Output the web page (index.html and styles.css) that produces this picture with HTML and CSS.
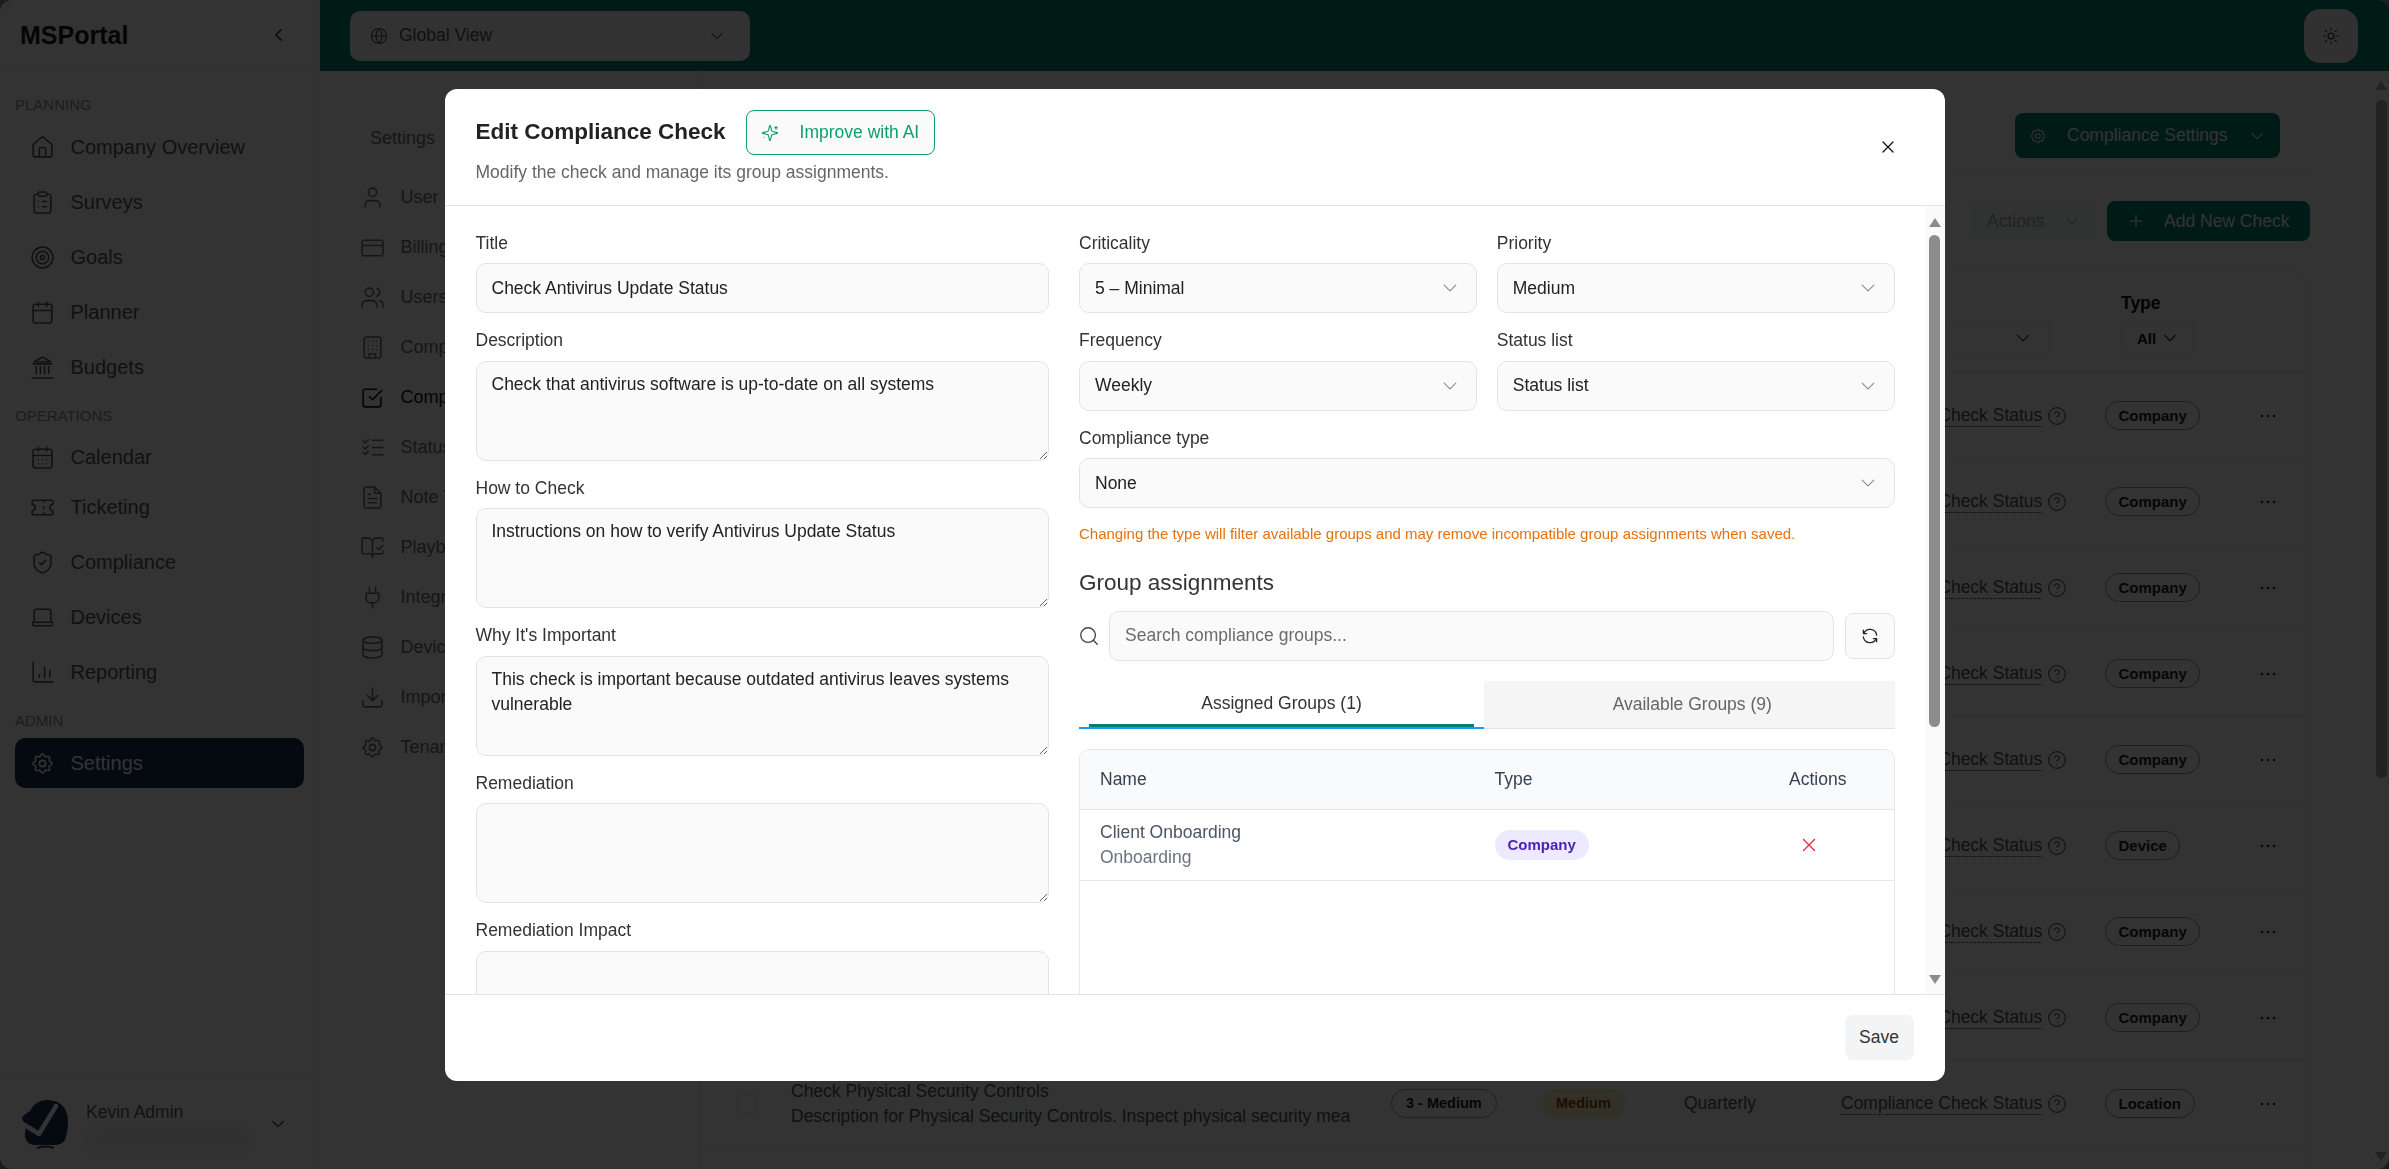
FILE: index.html
```html
<!DOCTYPE html>
<html lang="en">
<head>
<meta charset="utf-8">
<title>MSPortal – Edit Compliance Check</title>
<link rel="stylesheet" href="styles.css">
</head>
<body>
<svg class="defs" aria-hidden="true">
  <symbol id="home" viewBox="0 0 24 24"><path d="M15 21v-8a1 1 0 0 0-1-1h-4a1 1 0 0 0-1 1v8"/><path d="M3 10a2 2 0 0 1 .709-1.528l7-6a2 2 0 0 1 2.582 0l7 6A2 2 0 0 1 21 10v9a2 2 0 0 1-2 2H5a2 2 0 0 1-2-2z"/></symbol>
  <symbol id="clip" viewBox="0 0 24 24"><rect x="8" y="2" width="8" height="4" rx="1"/><path d="M16 4h2a2 2 0 0 1 2 2v14a2 2 0 0 1-2 2H6a2 2 0 0 1-2-2V6a2 2 0 0 1 2-2h2"/><path d="M12 11h4M12 16h4M8 11h.01M8 16h.01"/></symbol>
  <symbol id="target" viewBox="0 0 24 24"><circle cx="12" cy="12" r="10"/><circle cx="12" cy="12" r="6"/><circle cx="12" cy="12" r="2"/></symbol>
  <symbol id="cal" viewBox="0 0 24 24"><path d="M8 2v4M16 2v4"/><rect x="3" y="4" width="18" height="18" rx="2"/><path d="M3 10h18"/></symbol>
  <symbol id="bank" viewBox="0 0 24 24"><path d="M2 22h20M6 18v-7M10 18v-7M14 18v-7M18 18v-7M3 8.500h18M12 2 4 6.500h16z"/></symbol>
  <symbol id="caldots" viewBox="0 0 24 24"><path d="M8 2v4M16 2v4"/><rect x="3" y="4" width="18" height="18" rx="2"/><path d="M3 10h18M8 14h.01M12 14h.01M16 14h.01M8 18h.01M12 18h.01M16 18h.01"/></symbol>
  <symbol id="ticket" viewBox="0 0 24 24"><path d="M2 9a3 3 0 0 1 0 6v2a2 2 0 0 0 2 2h16a2 2 0 0 0 2-2v-2a3 3 0 0 1 0-6V7a2 2 0 0 0-2-2H4a2 2 0 0 0-2 2Z"/><path d="M13 5v2M13 17v2M13 11v2"/></symbol>
  <symbol id="shield" viewBox="0 0 24 24"><path d="M20 13c0 5-3.500 7.500-7.660 8.950a1 1 0 0 1-.67-.01C7.500 20.500 4 18 4 13V6a1 1 0 0 1 1-1c2 0 4.500-1.200 6.240-2.720a1.170 1.170 0 0 1 1.520 0C14.510 3.810 17 5 19 5a1 1 0 0 1 1 1z"/><path d="m9 12 2 2 4-4"/></symbol>
  <symbol id="laptop" viewBox="0 0 24 24"><path d="M4 16V6a2 2 0 0 1 2-2h12a2 2 0 0 1 2 2v10"/><path d="M2.500 16.500h19v2.500a1 1 0 0 1-1 1h-17a1 1 0 0 1-1-1z"/></symbol>
  <symbol id="chart" viewBox="0 0 24 24"><path d="M3 2v17a2 2 0 0 0 2 2h17M9 17v-3M14 17V7M19 17v-7"/></symbol>
  <symbol id="gear" viewBox="0 0 24 24"><path d="M10.325 4.317c.426-1.756 2.924-1.756 3.350 0a1.724 1.724 0 0 0 2.573 1.066c1.543-.94 3.310.826 2.370 2.370a1.724 1.724 0 0 0 1.065 2.572c1.756.426 1.756 2.924 0 3.350a1.724 1.724 0 0 0-1.066 2.573c.94 1.543-.826 3.310-2.370 2.370a1.724 1.724 0 0 0-2.572 1.065c-.426 1.756-2.924 1.756-3.350 0a1.724 1.724 0 0 0-2.573-1.066c-1.543.94-3.310-.826-2.370-2.370a1.724 1.724 0 0 0-1.065-2.572c-1.756-.426-1.756-2.924 0-3.350a1.724 1.724 0 0 0 1.066-2.573c-.94-1.543.826-3.310 2.370-2.370 1 .608 2.296.07 2.572-1.065z"/><circle cx="12" cy="12" r="3"/></symbol>
  <symbol id="globe" viewBox="0 0 24 24"><circle cx="12" cy="12" r="10"/><path d="M2 12h20M12 2a14.500 14.500 0 0 0 0 20 14.500 14.500 0 0 0 0-20"/></symbol>
  <symbol id="down" viewBox="0 0 24 24"><path d="m5 8.500 7 7 7-7"/></symbol>
  <symbol id="left" viewBox="0 0 24 24"><path d="m15 5-7 7 7 7"/></symbol>
  <symbol id="user" viewBox="0 0 24 24"><circle cx="12" cy="7" r="4"/><path d="M5 21v-2a4 4 0 0 1 4-4h6a4 4 0 0 1 4 4v2"/></symbol>
  <symbol id="card" viewBox="0 0 24 24"><rect x="2" y="5" width="20" height="15" rx="2"/><path d="M2 10h20"/></symbol>
  <symbol id="users" viewBox="0 0 24 24"><path d="M16 21v-2a4 4 0 0 0-4-4H6a4 4 0 0 0-4 4v2"/><circle cx="9" cy="7" r="4"/><path d="M22 21v-2a4 4 0 0 0-3-3.870M16 3.130a4 4 0 0 1 0 7.750"/></symbol>
  <symbol id="building" viewBox="0 0 24 24"><rect x="4" y="2" width="16" height="20" rx="2"/><path d="M9 22v-4h6v4M8 6h.01M12 6h.01M16 6h.01M8 10h.01M12 10h.01M16 10h.01M8 14h.01M12 14h.01M16 14h.01"/></symbol>
  <symbol id="boxcheck" viewBox="0 0 24 24"><path d="m9 11 3 3 9-9"/><path d="M20 12v7a2 2 0 0 1-2 2H5a2 2 0 0 1-2-2V6a2 2 0 0 1 2-2h11"/></symbol>
  <symbol id="listcheck" viewBox="0 0 24 24"><path d="m3 5.500 2 2 3-3M3 16.500l2 2 3-3M12 5h10M12 12h10M12 19h10M3 11.500l2 2 3-3"/></symbol>
  <symbol id="note" viewBox="0 0 24 24"><path d="M14 2H6a2 2 0 0 0-2 2v16a2 2 0 0 0 2 2h12a2 2 0 0 0 2-2V8z"/><path d="M14 2v6h6M16 13H8M16 17H8M10 9H8"/></symbol>
  <symbol id="book" viewBox="0 0 24 24"><path d="M12 21V7M16 12l2 2 4-4"/><path d="M22 6V4a1 1 0 0 0-1-1h-5a4 4 0 0 0-4 4 4 4 0 0 0-4-4H3a1 1 0 0 0-1 1v13a1 1 0 0 0 1 1h6a3 3 0 0 1 3 3 3 3 0 0 1 3-3h6a1 1 0 0 0 1-1v-1.300"/></symbol>
  <symbol id="plug" viewBox="0 0 24 24"><path d="M12 22v-5M9 8V2M15 8V2M18 8v5a4 4 0 0 1-4 4h-4a4 4 0 0 1-4-4V8Z"/></symbol>
  <symbol id="db" viewBox="0 0 24 24"><ellipse cx="12" cy="5" rx="9" ry="3"/><path d="M3 5v14a9 3 0 0 0 18 0V5"/><path d="M3 12a9 3 0 0 0 18 0"/></symbol>
  <symbol id="import" viewBox="0 0 24 24"><path d="M21 15v4a2 2 0 0 1-2 2H5a2 2 0 0 1-2-2v-4M7 10l5 5 5-5M12 15V3"/></symbol>
  <symbol id="sun" viewBox="0 0 24 24"><circle cx="12" cy="12" r="4"/><path d="M12 2v2M12 20v2M4.900 4.900l1.400 1.400M17.700 17.700l1.400 1.400M2 12h2M20 12h2M6.300 17.700l-1.400 1.400M19.100 4.900l-1.400 1.400"/></symbol>
  <symbol id="spark" viewBox="0 0 24 24"><path d="M9.937 15.500A2 2 0 0 0 8.500 14.063l-6.135-1.582a.5.5 0 0 1 0-.962L8.500 9.936A2 2 0 0 0 9.937 8.500l1.582-6.135a.5.5 0 0 1 .963 0L14.063 8.500A2 2 0 0 0 15.500 9.937l6.135 1.581a.5.5 0 0 1 0 .964L15.500 14.063a2 2 0 0 0-1.437 1.437l-1.582 6.135a.5.5 0 0 1-.963 0z"/><path d="M20 3v4M22 5h-4M4 18v.01"/></symbol>
  <symbol id="search" viewBox="0 0 24 24"><circle cx="11" cy="11" r="8"/><path d="m21 21-4.300-4.300"/></symbol>
  <symbol id="refresh" viewBox="0 0 24 24"><path d="M20 11a8.100 8.100 0 0 0-15.500-2M4 5v4h4M4 13a8.100 8.100 0 0 0 15.500 2M20 19v-4h-4"/></symbol>
  <symbol id="x" viewBox="0 0 24 24"><path d="M18 6 6 18M6 6l12 12"/></symbol>
  <symbol id="plus" viewBox="0 0 24 24"><path d="M5 12h14M12 5v14"/></symbol>
  <symbol id="help" viewBox="0 0 24 24"><circle cx="12" cy="12" r="10"/><path d="M9.100 9a3 3 0 0 1 5.800 1c0 2-3 3-3 3M12 17h.01"/></symbol>
  <symbol id="dots" viewBox="0 0 24 24"><circle class="dot" cx="6" cy="12" r="1.250"/><circle class="dot" cx="12" cy="12" r="1.250"/><circle class="dot" cx="18" cy="12" r="1.250"/></symbol>
</svg>

<div class="app">
  <aside class="sidebar">
    <div class="brand"><span class="brand-name">MSPortal</span><svg class="ic ic-18 brand-chev"><use href="#left"/></svg></div>
    <nav class="side-nav">
      <section class="side-sec">
        <h2 class="side-label">PLANNING</h2>
        <a class="side-item"><svg class="ic ic-25"><use href="#home"/></svg>Company Overview</a>
        <a class="side-item"><svg class="ic ic-25"><use href="#clip"/></svg>Surveys</a>
        <a class="side-item"><svg class="ic ic-25"><use href="#target"/></svg>Goals</a>
        <a class="side-item"><svg class="ic ic-25"><use href="#cal"/></svg>Planner</a>
        <a class="side-item"><svg class="ic ic-25"><use href="#bank"/></svg>Budgets</a>
      </section>
      <section class="side-sec side-sec-ops">
        <h2 class="side-label">OPERATIONS</h2>
        <a class="side-item"><svg class="ic ic-25"><use href="#caldots"/></svg>Calendar</a>
        <a class="side-item side-item-tight"><svg class="ic ic-25"><use href="#ticket"/></svg>Ticketing</a>
        <a class="side-item"><svg class="ic ic-25"><use href="#shield"/></svg>Compliance</a>
        <a class="side-item"><svg class="ic ic-25"><use href="#laptop"/></svg>Devices</a>
        <a class="side-item"><svg class="ic ic-25"><use href="#chart"/></svg>Reporting</a>
      </section>
      <section class="side-sec">
        <h2 class="side-label">ADMIN</h2>
        <a class="side-item side-item-active"><svg class="ic ic-25"><use href="#gear"/></svg>Settings</a>
      </section>
    </nav>
    <div class="side-user">
      <svg class="avatar" viewBox="0 0 50 50"><path class="avatar-blob" d="M1 19C2 16 6 14 9 12 13 4 20 1 27 1 40 1 47 10 47 22 47 30 46 34 45 38 44 44 38 46 34 46H14C8 46 4 42 4 36 4 32 5 27 7 25 4 24 1 22 1 19Z"/><path class="avatar-arc" d="M16 49Q24 46 33 49"/><path class="avatar-check" d="M7 28l11 7L35 7"/></svg>
      <div class="user-text">
        <span class="user-name">Kevin Admin</span>
        <span class="user-blur"></span>
      </div>
      <svg class="ic ic-18 user-chev"><use href="#down"/></svg>
    </div>
  </aside>

  <div class="main">
    <header class="topbar">
      <div class="scope"><svg class="ic ic-18"><use href="#globe"/></svg><span class="scope-text">Global View</span><svg class="ic ic-18 scope-chev"><use href="#down"/></svg></div>
      <button class="theme"><svg class="ic ic-18"><use href="#sun"/></svg></button>
    </header>
    <div class="workspace">
      <nav class="settings-nav">
        <div class="settings-title">Settings</div>
        <a class="set-item"><svg class="ic ic-25"><use href="#user"/></svg>User Settings</a>
        <a class="set-item"><svg class="ic ic-25"><use href="#card"/></svg>Billing</a>
        <a class="set-item"><svg class="ic ic-25"><use href="#users"/></svg>Users</a>
        <a class="set-item"><svg class="ic ic-25"><use href="#building"/></svg>Companies</a>
        <a class="set-item set-item-active"><svg class="ic ic-25"><use href="#boxcheck"/></svg>Compliance</a>
        <a class="set-item"><svg class="ic ic-25"><use href="#listcheck"/></svg>Status Lists</a>
        <a class="set-item"><svg class="ic ic-25"><use href="#note"/></svg>Note Templates</a>
        <a class="set-item"><svg class="ic ic-25"><use href="#book"/></svg>Playbooks</a>
        <a class="set-item"><svg class="ic ic-25"><use href="#plug"/></svg>Integrations</a>
        <a class="set-item"><svg class="ic ic-25"><use href="#db"/></svg>Device Types</a>
        <a class="set-item"><svg class="ic ic-25"><use href="#import"/></svg>Import</a>
        <a class="set-item"><svg class="ic ic-25"><use href="#gear"/></svg>Tenant Settings</a>
      </nav>
      <main class="content">
        <div class="content-head">
          <button class="btn-primary btn-settings"><svg class="ic ic-18"><use href="#gear"/></svg><span class="btn-text">Compliance Settings</span><svg class="ic ic-18"><use href="#down"/></svg></button>
        </div>
        <div class="toolbar">
          <button class="btn-muted"><span>Actions</span><svg class="ic ic-18"><use href="#down"/></svg></button>
          <button class="btn-primary btn-add"><svg class="ic ic-20"><use href="#plus"/></svg><span class="btn-text">Add New Check</span></button>
        </div>
        <div class="checks">
          <div class="checks-head">
            <div class="filter-status"><svg class="ic ic-20"><use href="#down"/></svg></div>
            <div class="filter-type"><div class="filter-title">Type</div><div class="filter-select"><span>All</span><svg class="ic ic-18"><use href="#down"/></svg></div></div>
          </div>
          <div class="check-row"><span class="status">Compliance Check Status</span><svg class="ic ic-20 help"><use href="#help"/></svg><span class="type-badge">Company</span><svg class="ic ic-24 dots"><use href="#dots"/></svg></div>
          <div class="check-row"><span class="status">Compliance Check Status</span><svg class="ic ic-20 help"><use href="#help"/></svg><span class="type-badge">Company</span><svg class="ic ic-24 dots"><use href="#dots"/></svg></div>
          <div class="check-row"><span class="status">Compliance Check Status</span><svg class="ic ic-20 help"><use href="#help"/></svg><span class="type-badge">Company</span><svg class="ic ic-24 dots"><use href="#dots"/></svg></div>
          <div class="check-row"><span class="status">Compliance Check Status</span><svg class="ic ic-20 help"><use href="#help"/></svg><span class="type-badge">Company</span><svg class="ic ic-24 dots"><use href="#dots"/></svg></div>
          <div class="check-row"><span class="status">Compliance Check Status</span><svg class="ic ic-20 help"><use href="#help"/></svg><span class="type-badge">Company</span><svg class="ic ic-24 dots"><use href="#dots"/></svg></div>
          <div class="check-row"><span class="status">Compliance Check Status</span><svg class="ic ic-20 help"><use href="#help"/></svg><span class="type-badge">Device</span><svg class="ic ic-24 dots"><use href="#dots"/></svg></div>
          <div class="check-row"><span class="status">Compliance Check Status</span><svg class="ic ic-20 help"><use href="#help"/></svg><span class="type-badge">Company</span><svg class="ic ic-24 dots"><use href="#dots"/></svg></div>
          <div class="check-row"><span class="status">Compliance Check Status</span><svg class="ic ic-20 help"><use href="#help"/></svg><span class="type-badge">Company</span><svg class="ic ic-24 dots"><use href="#dots"/></svg></div>
          <div class="check-row">
            <span class="row-check"></span>
            <div class="row-title"><div class="row-name">Check Physical Security Controls</div><div class="row-desc">Description for Physical Security Controls. Inspect physical security mea</div></div>
            <span class="crit-badge">3 - Medium</span>
            <span class="prio-badge">Medium</span>
            <span class="freq">Quarterly</span>
            <span class="status">Compliance Check Status</span><svg class="ic ic-20 help"><use href="#help"/></svg><span class="type-badge">Location</span><svg class="ic ic-24 dots"><use href="#dots"/></svg>
          </div>
          <div class="check-row"></div>
        </div>
      </main>
      <div class="page-scroll">
        <span class="arrow-up page-arrow-up"></span>
        <span class="page-thumb"></span>
        <span class="scroll-space"></span>
        <span class="arrow-down page-arrow-down"></span>
      </div>
    </div>
  </div>
</div>

<div class="overlay">
  <div class="modal">
    <header class="modal-head">
      <div class="modal-heading">
        <div class="modal-title-row">
          <h1 class="modal-title">Edit Compliance Check</h1>
          <button class="btn-ai"><svg class="ic ic-18"><use href="#spark"/></svg><span>Improve with AI</span></button>
        </div>
        <p class="modal-sub">Modify the check and manage its group assignments.</p>
      </div>
      <button class="close"><svg class="ic ic-20"><use href="#x"/></svg></button>
    </header>
    <div class="modal-body">
      <div class="form-grid">
        <div class="col-left">
          <div class="field"><label class="label">Title</label><input class="control" value="Check Antivirus Update Status"></div>
          <div class="field"><label class="label">Description</label><textarea class="control area">Check that antivirus software is up-to-date on all systems</textarea></div>
          <div class="field"><label class="label">How to Check</label><textarea class="control area">Instructions on how to verify Antivirus Update Status</textarea></div>
          <div class="field"><label class="label">Why It's Important</label><textarea class="control area">This check is important because outdated antivirus leaves systems vulnerable</textarea></div>
          <div class="field"><label class="label">Remediation</label><textarea class="control area"></textarea></div>
          <div class="field"><label class="label">Remediation Impact</label><textarea class="control area"></textarea></div>
        </div>
        <div class="col-right">
          <div class="select-grid">
            <div class="field"><label class="label">Criticality</label><div class="control select"><span>5 – Minimal</span><svg class="ic ic-20"><use href="#down"/></svg></div></div>
            <div class="field"><label class="label">Priority</label><div class="control select"><span>Medium</span><svg class="ic ic-20"><use href="#down"/></svg></div></div>
            <div class="field"><label class="label">Frequency</label><div class="control select"><span>Weekly</span><svg class="ic ic-20"><use href="#down"/></svg></div></div>
            <div class="field"><label class="label">Status list</label><div class="control select"><span>Status list</span><svg class="ic ic-20"><use href="#down"/></svg></div></div>
            <div class="field field-wide"><label class="label">Compliance type</label><div class="control select"><span>None</span><svg class="ic ic-20"><use href="#down"/></svg></div></div>
          </div>
          <p class="warning">Changing the type will filter available groups and may remove incompatible group assignments when saved.</p>
          <h2 class="group-title">Group assignments</h2>
          <div class="search-row">
            <svg class="ic ic-22 search-ic"><use href="#search"/></svg>
            <input class="control search-input" placeholder="Search compliance groups...">
            <button class="refresh"><svg class="ic ic-20"><use href="#refresh"/></svg></button>
          </div>
          <div class="tabs">
            <div class="tab tab-active">Assigned Groups (1)</div>
            <div class="tab tab-idle">Available Groups (9)</div>
          </div>
          <div class="groups">
            <div class="groups-row groups-header"><span>Name</span><span>Type</span><span>Actions</span></div>
            <div class="groups-row groups-item">
              <div><div class="group-name">Client Onboarding</div><div class="group-sub">Onboarding</div></div>
              <div><span class="company-pill">Company</span></div>
              <svg class="ic ic-22 remove"><use href="#x"/></svg>
            </div>
          </div>
        </div>
      </div>
      <div class="modal-scroll">
        <span class="arrow-up"></span>
        <span class="modal-thumb"></span>
        <span class="scroll-space"></span>
        <span class="arrow-down"></span>
      </div>
    </div>
    <footer class="modal-foot"><button class="save">Save</button></footer>
  </div>
</div>
</body>
</html>
```

FILE: styles.css
```css
* { box-sizing: border-box; }
html, body { margin: 0; height: 100%; overflow: hidden; }
body { font-family: "Liberation Sans", Arial, sans-serif; font-size: 17.5px; color: #374151; background: #8a8a8a; }
button { font: inherit; border: 0; cursor: pointer; }
h1, h2, p { margin: 0; }
.defs { position: absolute; width: 0; height: 0; }
.ic { fill: none; stroke: currentColor; stroke-width: 1.5; stroke-linecap: round; stroke-linejoin: round; flex: none; display: block; }
.ic-25 { width: 25px; height: 25px; }
.ic-24 { width: 24px; height: 24px; }
.ic-22 { width: 22px; height: 22px; }
.ic-20 { width: 20px; height: 20px; }
.ic-18 { width: 18px; height: 18px; }
.dot { fill: currentColor; stroke: none; }

/* app shell */
.app { display: flex; height: 1169px; border-radius: 12px; overflow: hidden; background: #fff; }
.sidebar { width: 320px; flex: none; display: flex; flex-direction: column; border-right: 1px solid #eceff3; color: #5f6368; }
.brand { height: 71px; flex: none; display: flex; align-items: center; justify-content: space-between; padding: 0 31px 0 20px; border-bottom: 1px solid #e6e8ec; }
.brand-name { font-size: 25px; font-weight: 700; color: #1a1a1a; }
.brand-chev { color: #111; }
.side-nav { flex: 1; padding: 24px 15px 0; display: flex; flex-direction: column; gap: 14px; }
.side-sec { display: flex; flex-direction: column; gap: 5px; }
.side-label { font-size: 15px; font-weight: 400; line-height: 20px; margin-bottom: 2px; color: #8a8f96; }
.side-sec-ops .side-label { margin-bottom: 1px; }
.side-item { height: 50px; display: flex; align-items: center; gap: 15.5px; padding-left: 15px; font-size: 20px; color: #54585d; border-radius: 10px; }
.side-item-tight { margin-top: -5px; }
.side-item-active { background: #1c3252; color: #fff; }
.side-user { height: 91px; flex: none; border-top: 1px solid #e6e8ec; display: flex; padding: 20px 32px 0 21px; gap: 15px; }
.avatar { width: 50px; height: 50px; flex: none; }
.avatar-blob { fill: #1c3252; }
.avatar-arc { fill: none; stroke: #1c3252; stroke-width: 2; }
.avatar-check { fill: none; stroke: #fff; stroke-width: 4.500; stroke-linecap: round; stroke-linejoin: round; }
.user-text { flex: 1; display: flex; flex-direction: column; padding-top: 2px; }
.user-name { font-size: 17.5px; line-height: 22px; color: #5f5a58; }
.user-blur { width: 165px; height: 22px; margin-top: 5px; background: rgba(0,0,0,.06); filter: blur(8px); }
.user-chev { margin-top: 16px; color: #222; }

.main { flex: 1; min-width: 0; display: flex; flex-direction: column; }
.topbar { height: 71px; flex: none; background: #00826f; display: flex; align-items: center; justify-content: space-between; padding: 0 31px 0 30px; }
.scope { width: 400px; height: 50px; background: #fbfbfb; border-radius: 10px; display: flex; align-items: center; padding: 0 24px 0 20px; color: #555; }
.scope-text { flex: 1; margin-left: 11px; }
.theme { width: 54px; height: 54px; border-radius: 16px; background: #f3f3f3; color: #222; display: flex; align-items: center; justify-content: center; }

.workspace { flex: 1; display: flex; min-height: 0; }
.settings-nav { width: 380px; flex: none; padding: 55px 0 0 40px; border-right: 1px solid #eceef1; }
.settings-title { font-size: 18px; line-height: 25px; margin: 0 0 21px 10px; color: #6d6f72; }
.set-item { height: 50px; display: flex; align-items: center; gap: 15.5px; font-size: 18px; color: #6d6f72; white-space: nowrap; }
.set-item-active { color: #111; }

.content { flex: 1; min-width: 0; padding: 42px 63px 0 0; }
.content-head { display: flex; justify-content: flex-end; padding: 0 30px 12px 0; border-bottom: 1px solid #eceef1; }
.btn-primary { background: #00826f; color: #fff; border-radius: 8px; display: flex; align-items: center; white-space: nowrap; }
.btn-text { flex: 1; text-align: left; }
.btn-settings { width: 265px; height: 45px; padding: 0 15px 0 14px; gap: 20px; }
.toolbar { display: flex; justify-content: flex-end; gap: 10px; margin-top: 30px; }
.btn-muted { width: 127px; height: 40px; border-radius: 8px; background: #f6f7f8; color: #a9adb3; display: flex; align-items: center; justify-content: space-between; padding: 0 16px 0 17px; }
.btn-add { width: 203px; height: 40px; padding: 0 15px 0 19px; gap: 18px; }
.checks { margin-top: 30px; border: 1px solid #eceef1; border-radius: 20px 20px 0 0; }
.checks-head { height: 101px; border-bottom: 1px solid #e8eaed; display: grid; grid-template-columns: 1140px 209px 1fr; }
.filter-status { grid-column: 2; height: 34px; margin-top: 49px; border: 1px solid #e7e9ec; border-radius: 8px; display: flex; justify-content: flex-end; align-items: center; padding-right: 16px; color: #333; }
.filter-type { grid-column: 3; margin-left: 71px; padding-top: 20px; }
.filter-title { font-weight: 700; line-height: 22px; color: #111; margin-bottom: 7px; }
.filter-select { width: 73px; height: 34px; border: 1px solid #e7e9ec; border-radius: 8px; display: flex; align-items: center; gap: 5px; padding-left: 15px; font-size: 15px; font-weight: 700; color: #111; }

.check-row { height: 86px; border-bottom: 1px solid #e8eaed; display: grid; grid-template-columns: 90px 600px 151px 142px 157px 215px 50px 1fr; align-items: center; }
.row-check { grid-column: 1; width: 20px; height: 20px; margin-left: 36px; border: 1px solid #e0e2e5; border-radius: 4px; }
.row-title { grid-column: 2; }
.row-name { line-height: 25px; color: #4b5563; }
.row-desc { line-height: 25px; color: #4b5563; white-space: nowrap; }
.crit-badge, .prio-badge, .type-badge { font-size: 15px; font-weight: 700; height: 29px; line-height: 27px; border-radius: 15px; justify-self: start; padding: 0 12.500px; }
.crit-badge { grid-column: 3; border: 1px solid #9aa0a8; color: #222; padding: 0 14px; font-size: 14.500px; }
.prio-badge { grid-column: 4; background: #fdf0c8; color: #8a4b10; padding: 0 14px; line-height: 29px; font-size: 14.500px; }
.freq { grid-column: 5; color: #4b5563; }
.status { grid-column: 6; grid-row: 1; justify-self: start; color: #555; line-height: 21px; border-bottom: 1px dotted #222; white-space: nowrap; }
.help { grid-column: 6; grid-row: 1; justify-self: start; margin-left: 206px; color: #666; }
.type-badge { grid-column: 7 / 9; grid-row: 1; margin-left: 49px; border: 1px solid #8f949b; color: #1e1e1e; }
.dots { grid-column: 8; grid-row: 1; justify-self: end; margin-right: 29px; color: #222; }

.page-scroll, .modal-scroll { display: flex; flex-direction: column; align-items: center; }
.page-scroll { width: 16px; flex: none; padding: 10px 0 8px; }
.scroll-space { flex: 1; }
.arrow-up, .arrow-down { width: 0; height: 0; border-left: 6px solid transparent; border-right: 6px solid transparent; }
.arrow-up { border-bottom: 9px solid #8c8c8c; }
.arrow-down { border-top: 9px solid #8c8c8c; }
.page-arrow-up { border-bottom-color: #aaa; }
.page-arrow-down { border-top-color: #aaa; }
.page-thumb { width: 11px; height: 678px; margin-top: 10px; background: #a9a9a9; border-radius: 6px; }

/* modal */
.overlay { position: fixed; inset: 0; background: rgba(0,0,0,.8); display: flex; align-items: center; justify-content: center; }
.modal { width: 1500px; height: 992px; background: #fff; border-radius: 12px; display: flex; flex-direction: column; overflow: hidden; }
.modal-head { height: 117px; flex: none; border-bottom: 1px solid #e3e3e3; display: flex; justify-content: space-between; align-items: center; padding: 0 47px 0 31px; }
.modal-heading { margin-top: 2px; }
.modal-title-row { display: flex; align-items: center; gap: 20px; }
.modal-title { font-size: 22.500px; font-weight: 700; color: #222; margin-top: -2px; }
.btn-ai { width: 189px; height: 45px; border: 1px solid #0f9d6c; border-radius: 8px; background: #fafafa; color: #0f9d6c; display: flex; align-items: center; gap: 21px; padding-left: 14px; white-space: nowrap; }
.modal-sub { margin-top: 5px; line-height: 25px; color: #666; }
.close { width: 20px; height: 20px; padding: 0; background: none; color: #111; }
.modal-body { flex: 1; min-height: 0; position: relative; overflow: hidden; }
.form-grid { display: grid; grid-template-columns: 573px 815.500px; gap: 30.500px; padding: 26px 0 0 31px; }
.col-left { display: flex; flex-direction: column; gap: 16px; }
.field { display: flex; flex-direction: column; }
.label { line-height: 22px; margin-bottom: 9.500px; color: #333; }
.control { height: 50px; width: 100%; font: inherit; color: #222; background: #fafafa; border: 1px solid #e3e3e3; border-radius: 10px; padding: 0 15px; outline: 0; }
.area { height: 100px; display: block; padding: 10px 15px; line-height: 25px; resize: vertical; }
.select { display: flex; align-items: center; justify-content: space-between; padding-right: 16px; }
.select .ic { color: #888; stroke-width: 1.25; }
.select-grid { display: grid; grid-template-columns: 1fr 1fr; gap: 16px 20px; }
.field-wide { grid-column: 1 / 3; }
.warning { margin-top: 16px; font-size: 15px; line-height: 20px; color: #e8710a; white-space: nowrap; }
.group-title { margin-top: 23.500px; font-size: 22.500px; font-weight: 400; line-height: 30px; color: #333; }
.search-row { margin-top: 13px; display: flex; align-items: center; gap: 9px; }
.search-ic { color: #444; margin-left: -1px; }
.search-input { flex: 1; width: auto; min-width: 0; }
.search-input::placeholder { color: #6b6b6b; opacity: 1; }
.refresh { width: 50px; height: 46px; margin-left: 2px; border: 1px solid #e3e3e3; border-radius: 8px; background: #fafafa; color: #222; display: flex; align-items: center; justify-content: center; padding: 0; }
.tabs { margin-top: 20px; display: grid; grid-template-columns: 405px 1fr; height: 48px; }
.tab { display: flex; align-items: center; justify-content: center; }
.tab-active { color: #333; border-bottom: 2px solid #2196f3; position: relative; padding-bottom: 1px; }
.tab-active::after { content: ""; position: absolute; left: 10px; right: 10px; bottom: 0; height: 3px; background: #00826f; }
.tab-idle { background: #f5f5f5; color: #666; border-bottom: 1px solid #e3e3e3; padding-left: 6px; }
.groups { margin-top: 20px; height: 500px; border: 1px solid #e5e7eb; border-radius: 10px; }
.groups-row { display: grid; grid-template-columns: 394.500px 294.500px 1fr; padding-left: 20px; align-items: center; }
.groups-header { height: 60px; background: #f9fafb; border-bottom: 1px solid #e5e7eb; border-radius: 10px 10px 0 0; color: #374151; }
.groups-item { height: 71px; border-bottom: 1px solid #e5e7eb; }
.group-name { line-height: 25px; color: #4b5563; }
.group-sub { line-height: 25px; color: #6b7280; }
.company-pill { display: inline-block; height: 30px; padding: 0 13px; line-height: 30px; border-radius: 15px; background: #ede9fe; color: #4a1fb8; font-size: 15px; font-weight: 700; }
.remove { margin-left: 8.500px; color: #ef2b3c; }
.modal-scroll { position: absolute; top: 0; right: 0; bottom: 0; width: 20px; padding: 12px 0 10px; background: #fafafa; }
.modal-thumb { width: 11px; height: 492px; margin-top: 8px; background: #8c8c8c; border-radius: 6px; }
.modal-foot { height: 87px; flex: none; border-top: 1px solid #e3e3e3; display: flex; justify-content: flex-end; align-items: center; padding-right: 31px; }
.save { width: 69px; height: 45px; border-radius: 8px; background: #f3f4f6; color: #333; }
```
